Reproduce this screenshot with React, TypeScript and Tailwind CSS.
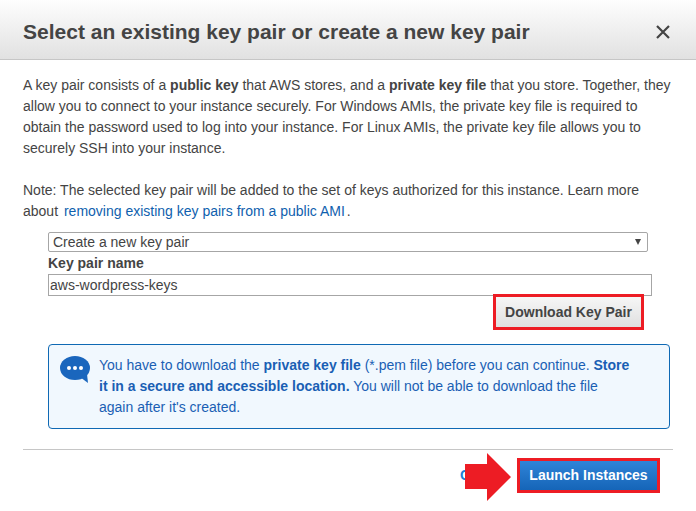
export default function App() {
  return (
    <div className="w-[696px] h-[511px] overflow-hidden bg-white text-[14px] leading-[21px] text-[#444444] font-['Liberation_Sans',Arial,sans-serif]">
      <header className="h-[60px] flex items-center justify-between pt-[4px] pl-[23px] pr-[25px] border-b border-[#c6c6c6] bg-gradient-to-b from-[#fefefe] to-[#e1e1e1]">
        <h1 className="text-[21px] leading-[24px] font-bold text-[#444444]">Select an existing key pair or create a new key pair</h1>
        <svg width="16" height="16" viewBox="0 0 16 16" className="text-[#444444]">
          <path d="M2 2 L14 14 M14 2 L2 14" stroke="currentColor" strokeWidth="2.2" fill="none" />
        </svg>
      </header>
      <main className="pt-[15px] px-[23px]">
        <p className="w-[650px]">
          A key pair consists of a <b>public key</b> that AWS stores, and a <b>private key file</b> that you store. Together, they allow you to connect to your instance securely. For Windows AMIs, the private key file is required to obtain the password used to log into your instance. For Linux AMIs, the private key file allows you to securely SSH into your instance.
        </p>
        <p className="mt-[21px] w-[650px]">
          Note: The selected key pair will be added to the set of keys authorized for this instance. Learn more about <a className="ml-[2px] text-[#0f5fae]">removing existing key pairs from a public AMI</a><span className="ml-[2px]">.</span>
        </p>
        <div className="ml-[25px] mt-[10px]">
          <div className="w-[600px] h-[20px] flex items-center justify-between pl-[4px] pr-[6px] border border-[#a6a6a6] rounded-[2px]">
            <span>Create a new key pair</span>
            <span className="w-0 h-0 border-x-[3.5px] border-x-transparent border-t-[6px] border-t-[#444444]" />
          </div>
          <div className="mt-[1px] font-bold">Key pair name</div>
          <div className="w-[604px] h-[22px] flex items-center pl-[1px] border border-[#a6a6a6]">aws-wordpress-keys</div>
          <div className="h-[50px] flex justify-end items-start pr-[29px] -mt-[2px]">
            <button className="relative z-10 w-[151px] h-[36px] border-[3px] border-[#ed1c24] bg-gradient-to-b from-[#f6f6f6] to-[#e0e0e0] font-bold text-[14px] text-[#444444]">Download Key Pair</button>
          </div>
          <div className="w-[622px] h-[85px] flex gap-[8px] pl-[11px] pr-[34px] pt-[10px] border border-[#0f69b4] rounded-[4px] bg-[#f1f8fe] text-[#1a5fb4]">
            <svg width="31" height="28" viewBox="0 0 31 28" className="shrink-0 mt-[1px]">
              <ellipse cx="15" cy="12" rx="15" ry="12" fill="#1a66bd" />
              <path d="M20 21 L28 27 L27 18 Z" fill="#1a66bd" />
              <circle cx="9" cy="12" r="2" fill="#fff" />
              <circle cx="15" cy="12" r="2" fill="#fff" />
              <circle cx="21" cy="12" r="2" fill="#fff" />
            </svg>
            <p>
              You have to download the <b>private key file</b> (*.pem file) before you can continue. <b>Store it in a secure and accessible location.</b> You will not be able to download the file again after it's created.
            </p>
          </div>
        </div>
        <hr className="mt-[20px] w-[650px] border-t border-[#c6c6c6]" />
        <div className="relative mt-[8px] w-[637px] flex items-center justify-end">
          <a className="text-[#1a7fd6] font-bold mr-[47px]">C</a>
          <button className="w-[143px] h-[35px] border-[3px] border-[#ed1c24] bg-gradient-to-b from-[#2f84d8] to-[#1565b8] text-white font-bold text-[14px]">Launch Instances</button>
          <svg width="47" height="48" viewBox="0 0 47 48" className="absolute left-[442px] top-[-5px]">
            <path d="M0 11 H22 V0 L46 24 L22 48 V36 H0 Z" fill="#ed1c24" />
          </svg>
        </div>
      </main>
    </div>
  );
}
